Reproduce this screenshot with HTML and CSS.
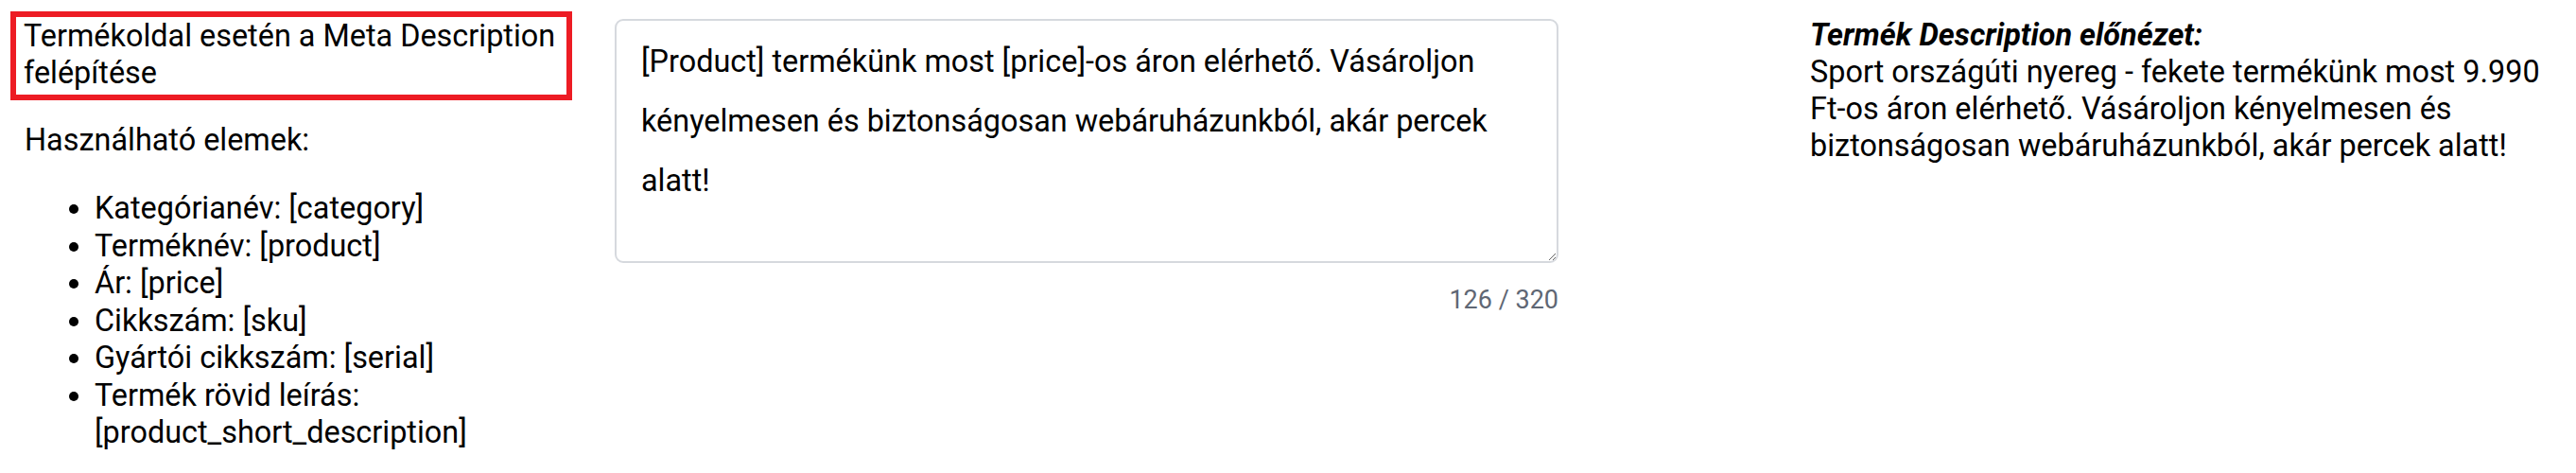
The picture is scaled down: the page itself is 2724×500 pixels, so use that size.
FILE: index.html
```html
<!DOCTYPE html>
<html lang="hu">
<head>
<meta charset="utf-8">
<title>Meta Description</title>
<link rel="stylesheet" href="styles.css">
</head>
<body>
<div class="page">
  <div class="col-help">
    <div class="help-title">Termékoldal esetén a Meta Description felépítése</div>
    <p class="help-lead">Használható elemek:</p>
    <ul class="help-list">
      <li>Kategórianév: [category]</li>
      <li>Terméknév: [product]</li>
      <li>Ár: [price]</li>
      <li>Cikkszám: [sku]</li>
      <li>Gyártói cikkszám: [serial]</li>
      <li>Termék rövid leírás: [product_short_description]</li>
    </ul>
  </div>
  <div class="col-editor">
    <textarea class="editor">[Product] termékünk most [price]-os áron elérhető. Vásároljon kényelmesen és biztonságosan webáruházunkból, akár percek alatt!</textarea>
    <div class="counter">126 / 320</div>
  </div>
  <div class="col-preview">
    <div class="preview-title">Termék Description előnézet:</div>
    <div class="preview-text">Sport országúti nyereg - fekete termékünk most 9.990 Ft-os áron elérhető. Vásároljon kényelmesen és biztonságosan webáruházunkból, akár percek alatt!</div>
  </div>
</div>
</body>
</html>
```
FILE: styles.css
```css
html, body {
  margin: 0;
  padding: 0;
  background: #ffffff;
}
body {
  font-family: Roboto, "Noto Sans", sans-serif;
  font-size: 32.4px;
  line-height: 39px;
  color: #000000;
}
.page {
  display: flex;
  align-items: flex-start;
  padding: 12px 0 0 11px;
}
.col-help {
  width: 594px;
  flex: none;
}
.help-title {
  border: 6px solid #ed1c24;
  padding: 1px 8px 3px 8px;
}
.help-lead {
  margin: 23px 0 0 15px;
}
.help-list {
  margin: 33px 0 0 0;
  padding-left: 89px;
  line-height: 39.5px;
}
.col-editor {
  width: 998px;
  flex: none;
  margin-left: 45px;
  margin-top: 8px;
}
.editor {
  display: block;
  box-sizing: border-box;
  width: 998px;
  height: 258px;
  margin: 0;
  padding: 12px 26px;
  border: 2px solid #d6d9de;
  border-radius: 9px;
  font-family: Roboto, "Noto Sans", sans-serif;
  font-size: 32.4px;
  line-height: 63px;
  color: #000000;
  background: #ffffff;
  outline: none;
}
.counter {
  margin-top: 23px;
  text-align: right;
  font-size: 27px;
  line-height: 32px;
  color: #5f6774;
}
.col-preview {
  width: 802px;
  flex: none;
  margin-left: 266px;
  margin-top: 6px;
}
.preview-title {
  font-weight: 700;
  font-style: italic;
}
```
